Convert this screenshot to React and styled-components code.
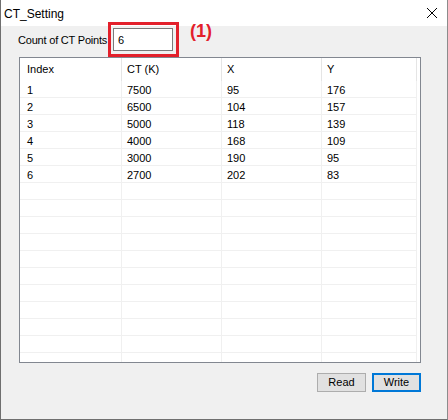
import React from "react";
import styled, { createGlobalStyle, css } from "styled-components";

const GlobalStyle = createGlobalStyle`
  html, body {
    margin: 0;
    padding: 0;
    background: #ffffff;
  }
  body {
    font-family: "Liberation Sans", Arial, sans-serif;
    font-size: 11px;
    color: #000;
  }
`;

const Window = styled.div`
  width: 448px;
  height: 420px;
  box-sizing: border-box;
  display: flex;
  flex-direction: column;
  background: #f0f0f0;
  border-left: 1px solid #6f6f6f;
  border-right: 1px solid #8c8c8c;
  border-bottom: 1px solid #6f6f6f;
`;

const TitleBar = styled.div`
  height: 26px;
  flex: 0 0 26px;
  background: #ffffff;
  display: flex;
  align-items: center;
  justify-content: space-between;
  padding: 0 9px 0 3px;
`;

const Title = styled.span`
  font-size: 12px;
  line-height: 26px;
  padding-top: 1px;
`;

const CloseGlyph = styled.svg`
  width: 12px;
  height: 12px;
  display: block;
`;

const Body = styled.div`
  display: flex;
  flex-direction: column;
  padding: 0 26px 0 18px;
`;

const CountRow = styled.div`
  display: flex;
  align-items: center;
  height: 23px;
  margin-top: 2px;
`;

const Label = styled.label`
  flex: 0 0 95px;
  margin-left: -1px;
  letter-spacing: -0.2px;
  line-height: 23px;
  padding-top: 2px;
  white-space: nowrap;
`;

const InputWrap = styled.div`
  position: relative;
  width: 60px;
  height: 23px;
`;

const CountInput = styled.div`
  box-sizing: border-box;
  width: 100%;
  height: 100%;
  background: #ffffff;
  border: 1px solid #7a7a7a;
  padding-left: 4px;
  padding-top: 1px;
  line-height: 21px;
`;

const Highlight = styled.div`
  position: absolute;
  top: -6px;
  left: -5px;
  right: -6px;
  bottom: -6px;
  border: 3px solid #e3202b;
  pointer-events: none;
`;

const Marker = styled.span`
  align-self: flex-start;
  margin-top: -6px;
  margin-left: 17px;
  color: #e3202b;
  font-weight: bold;
  font-size: 18px;
  line-height: 18px;
`;

const Grid = styled.div`
  margin-top: 6px;
  height: 306px;
  box-sizing: border-box;
  border: 1px solid #828790;
  background: #ffffff;
  overflow: hidden;
`;

const Row = styled.div`
  display: grid;
  grid-template-columns: 102px 100px 100px 95px;
  height: ${(p) => (p.$header ? 23 : 17)}px;
`;

const Cell = styled.div`
  box-sizing: border-box;
  padding-left: ${(p) => (p.$first ? 7 : 5)}px;
  white-space: nowrap;
  overflow: hidden;
  ${(p) =>
    p.$header
      ? css`
          border-right: 1px solid #e5e5e5;
          line-height: 23px;
        `
      : css`
          border-right: 1px solid #f0f0f0;
          border-bottom: 1px solid #f0f0f0;
          padding-top: 2px;
          line-height: 15px;
        `}
`;

const Footer = styled.div`
  display: flex;
  justify-content: flex-end;
  gap: 6px;
  margin-top: 10px;
`;

const Button = styled.button`
  width: 49px;
  height: 19px;
  box-sizing: border-box;
  padding: 0;
  margin: 0;
  background: #e1e1e1;
  font-family: "Liberation Sans", Arial, sans-serif;
  font-size: 11px;
  color: #000;
  line-height: 15px;
  border: ${(p) => (p.$default ? "2px solid #0078d7" : "1px solid #adadad")};
`;

const columns = ["Index", "CT (K)", "X", "Y"];

const points = [
  [1, 7500, 95, 176],
  [2, 6500, 104, 157],
  [3, 5000, 118, 139],
  [4, 4000, 168, 109],
  [5, 3000, 190, 95],
  [6, 2700, 202, 83],
];

const TOTAL_ROWS = 17;

export default function App() {
  const rows = Array.from({ length: TOTAL_ROWS }, (_, i) => points[i] || ["", "", "", ""]);

  return (
    <>
      <GlobalStyle />
      <Window>
        <TitleBar>
          <Title>CT_Setting</Title>
          <CloseGlyph viewBox="0 0 12 12">
            <path d="M1 1 L11 11 M11 1 L1 11" stroke="#000" strokeWidth="1" fill="none" />
          </CloseGlyph>
        </TitleBar>
        <Body>
          <CountRow>
            <Label>Count of CT Points</Label>
            <InputWrap>
              <CountInput>6</CountInput>
              <Highlight />
            </InputWrap>
            <Marker>(1)</Marker>
          </CountRow>
          <Grid>
            <Row $header>
              {columns.map((c, i) => (
                <Cell key={c} $header $first={i === 0}>
                  {c}
                </Cell>
              ))}
            </Row>
            {rows.map((r, ri) => (
              <Row key={ri}>
                {r.map((v, ci) => (
                  <Cell key={ci} $first={ci === 0}>
                    {v}
                  </Cell>
                ))}
              </Row>
            ))}
          </Grid>
          <Footer>
            <Button>Read</Button>
            <Button $default>Write</Button>
          </Footer>
        </Body>
      </Window>
    </>
  );
}
